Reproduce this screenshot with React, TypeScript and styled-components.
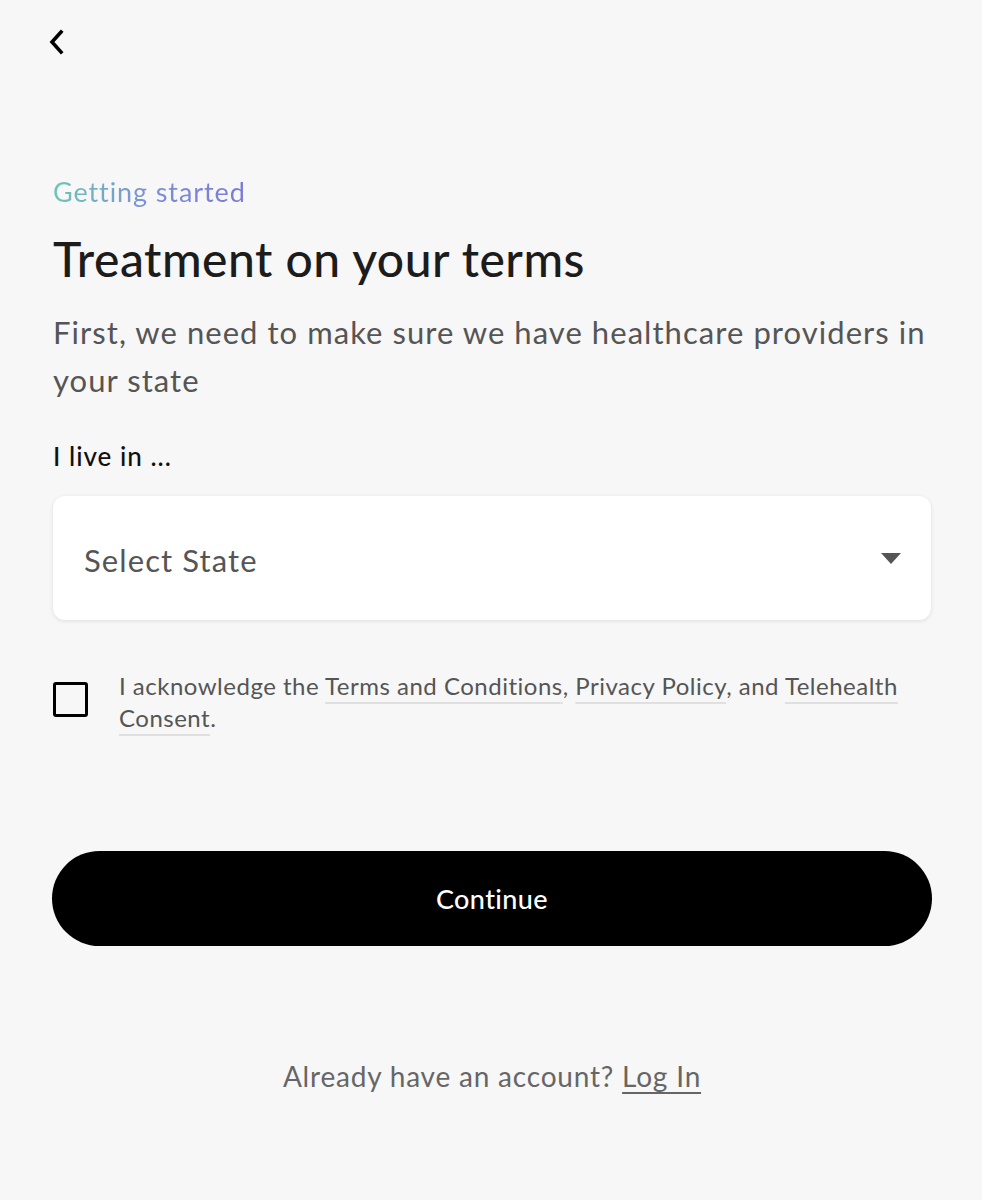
import React, { useState } from "react";
import styled, { createGlobalStyle } from "styled-components";

const Global = createGlobalStyle`
  html, body { margin: 0; padding: 0; background: #f7f7f7; }
  body { font-family: "Lato", "Noto Sans", sans-serif; -webkit-font-smoothing: antialiased; }
  * { box-sizing: border-box; }
`;

const Page = styled.div`
  width: 982px;
  min-height: 1200px;
  background: #f7f7f7;
  padding: 28px 51px 0 53px;
  display: flex;
  flex-direction: column;
`;

const BackButton = styled.button`
  width: 24px;
  height: 28px;
  margin-left: -8px;
  padding: 0;
  border: none;
  background: transparent;
  display: flex;
  align-items: center;
  justify-content: center;
  cursor: pointer;
`;

const Eyebrow = styled.div`
  margin-top: 120px;
  font-size: 27px;
  line-height: 32px;
  font-weight: 400;
  letter-spacing: 0.9px;
  background: linear-gradient(90deg, #6cc7b5 0%, #7a8fd8 50%, #7c79d4 100%);
  -webkit-background-clip: text;
  background-clip: text;
  color: transparent;
  width: fit-content;
`;

const Title = styled.h1`
  margin: 24px 0 0;
  font-size: 48px;
  line-height: 54px;
  font-weight: 500;
  color: #1c1c1c;
  letter-spacing: 0.5px;
`;

const Lead = styled.p`
  margin: 22px 0 0;
  font-size: 31px;
  line-height: 48px;
  color: #555555;
  font-weight: 400;
  letter-spacing: 1.05px;
`;

const Label = styled.div`
  margin-top: 36px;
  font-size: 26px;
  line-height: 32px;
  color: #111111;
  font-weight: 500;
  letter-spacing: 1px;
`;

const SelectBox = styled.div`
  margin-top: 24px;
  height: 124px;
  background: #ffffff;
  border-radius: 12px;
  box-shadow: 0 1px 4px rgba(0, 0, 0, 0.1);
  display: flex;
  align-items: center;
  justify-content: space-between;
  padding: 0 30px 0 31px;
  cursor: pointer;
`;

const SelectText = styled.span`
  font-size: 31px;
  color: #555555;
  font-weight: 400;
  letter-spacing: 1.1px;
  margin-top: 4px;
`;

const Caret = styled.span`
  width: 0;
  height: 0;
  border-left: 10px solid transparent;
  border-right: 10px solid transparent;
  border-top: 11px solid #555555;
  margin-top: 0;
`;

const ConsentRow = styled.label`
  margin-top: 50px;
  display: flex;
  align-items: flex-start;
  gap: 31px;
  cursor: pointer;
`;

const Box = styled.span<{ $checked: boolean }>`
  flex: none;
  width: 35px;
  height: 35px;
  margin-top: 12px;
  border: 3px solid #000;
  border-radius: 3px;
  background: ${(p) => (p.$checked ? "#000" : "transparent")};
`;

const ConsentText = styled.span`
  font-size: 24px;
  line-height: 32px;
  color: #555555;
  letter-spacing: 0.5px;
`;

const Link = styled.a`
  color: #555555;
  text-decoration: underline;
  text-decoration-color: #e0e0e0;
  text-decoration-thickness: 1.5px;
  text-underline-offset: 7px;
`;

const Continue = styled.button`
  margin-top: 117px;
  margin-left: -1px;
  width: 880px;
  height: 95px;
  border-radius: 48px;
  border: none;
  background: #000000;
  color: #ffffff;
  font-family: inherit;
  font-size: 27px;
  font-weight: 500;
  letter-spacing: 0.4px;
  cursor: pointer;
`;

const Footer = styled.div`
  margin-top: 113px;
  text-align: center;
  font-size: 28px;
  color: #666666;
  letter-spacing: 0.8px;
`;

const LoginLink = styled.a`
  color: #666666;
  text-decoration: underline;
  text-underline-offset: 5px;
  text-decoration-thickness: 2px;
`;

export default function App() {
  const [checked, setChecked] = useState(false);
  return (
    <>
      <Global />
      <Page>
        <BackButton aria-label="Back">
          <svg width="20" height="26" viewBox="0 0 20 26" fill="none">
            <path d="M14 3 L5 13 L14 23" stroke="#000" strokeWidth="3.6" strokeLinecap="square" strokeLinejoin="miter" />
          </svg>
        </BackButton>
        <Eyebrow>Getting started</Eyebrow>
        <Title>Treatment on your terms</Title>
        <Lead>First, we need to make sure we have healthcare providers in your state</Lead>
        <Label>I live in ...</Label>
        <SelectBox>
          <SelectText>Select State</SelectText>
          <Caret />
        </SelectBox>
        <ConsentRow onClick={() => setChecked(!checked)}>
          <Box $checked={checked} />
          <ConsentText>
            I acknowledge the <Link href="#">Terms and Conditions</Link>, <Link href="#">Privacy Policy</Link>, and{" "}
            <Link href="#">Telehealth Consent</Link>.
          </ConsentText>
        </ConsentRow>
        <Continue>Continue</Continue>
        <Footer>
          Already have an account? <LoginLink href="#">Log In</LoginLink>
        </Footer>
      </Page>
    </>
  );
}
